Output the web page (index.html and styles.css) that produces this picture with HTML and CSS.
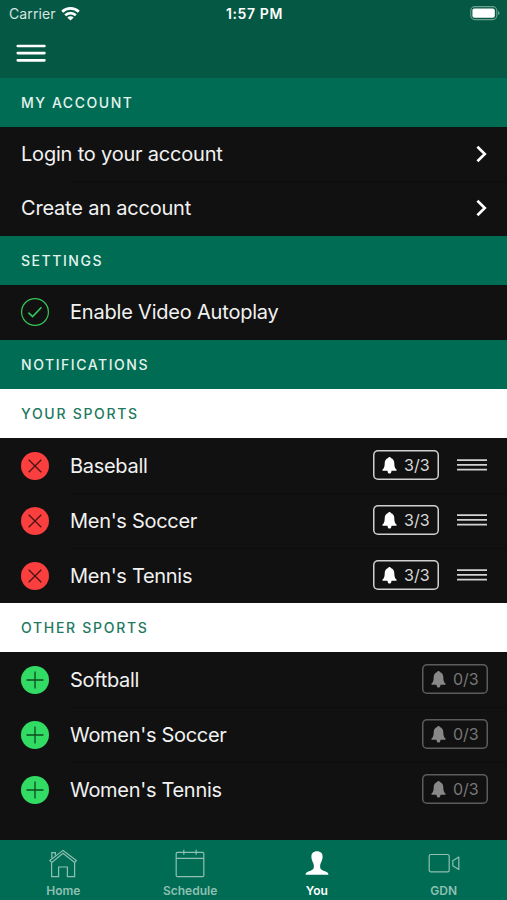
FILE: index.html
```html
<!DOCTYPE html>
<html lang="en">
<head>
    <meta charset="UTF-8">
    <meta name="viewport" content="width=device-width, initial-scale=1.0">
    <title>You</title>
    <link rel="stylesheet" href="styles.css">
</head>
<body>
    <svg class="symbols" aria-hidden="true">
        <symbol id="chevron" viewBox="0 0 12 18">
            <path d="M1.4 1.8 L8.8 9 L1.4 16.2" fill="none" stroke="#fff" stroke-width="2.6"/>
        </symbol>
        <symbol id="remove" viewBox="0 0 28 28">
            <circle cx="14" cy="14" r="14" fill="#fb3e3e"/>
            <path d="M7.7 7.7 L20.3 20.3 M20.3 7.7 L7.7 20.3" stroke="#471414" stroke-width="1.3"/>
        </symbol>
        <symbol id="add" viewBox="0 0 28 28">
            <circle cx="14" cy="14" r="14" fill="#32dc64"/>
            <path d="M14 5.5 V22.5 M5.5 14 H22.5" stroke="#0f4a20" stroke-width="1.3"/>
        </symbol>
        <symbol id="bell" viewBox="0 0 14 17">
            <path d="M7 0 C6.2 0 5.8 .5 5.7 1.1 C3.3 1.8 2.3 3.7 2.2 6.2 C2.1 9.5 1.8 11 0 12.6 V13.7 H14 V12.6 C12.2 11 11.9 9.5 11.8 6.2 C11.7 3.7 10.7 1.8 8.3 1.1 C8.2 .5 7.8 0 7 0 Z M5 13.7 C5.1 15.8 6 16.6 7 16.6 C8 16.6 8.9 15.8 9 13.7 Z" fill="currentColor"/>
        </symbol>
        <symbol id="grip" viewBox="0 0 30 12">
            <path d="M0 1.2 H30 M0 5.9 H30 M0 10.6 H30" stroke="#d2d2d2" stroke-width="1.7"/>
        </symbol>
    </svg>

    <div class="app">
        <header class="header">
            <div class="status">
                <div class="carrier">
                    <span>Carrier</span>
                    <svg width="19" height="14" viewBox="0 0 19 14" fill="none" stroke="#fff" stroke-width="2.7">
                        <path d="M1.2 4.8 C5.8 .3 13.2 .3 17.8 4.8"/>
                        <path d="M4.2 8.2 C7.2 5.3 11.8 5.3 14.8 8.2"/>
                        <path d="M9.5 13.6 L6.3 10.4 C8.2 8.9 10.8 8.9 12.7 10.4 Z" fill="#fff" stroke="none"/>
                    </svg>
                </div>
                <div class="time">1:57 PM</div>
                <svg class="battery" width="30" height="15" viewBox="0 0 30 15">
                    <rect x=".8" y=".6" width="26" height="13" rx="4" fill="none" stroke="#6b9f90" stroke-width="1.1"/>
                    <rect x="2.4" y="2.4" width="22.4" height="9.4" rx="2" fill="#fff"/>
                    <path d="M28 4.9 C30 5.6 30 8.4 28 9.1 Z" fill="#6b9f90"/>
                </svg>
            </div>
            <svg class="menu" width="30" height="20" viewBox="0 0 30 20">
                <path d="M1.8 2 H28.4 M1.8 9.1 H28.4 M1.8 16.3 H28.4" stroke="#fff" stroke-width="2.7" stroke-linecap="round"/>
            </svg>
        </header>

        <main>
            <h2 class="section">MY ACCOUNT</h2>
            <ul class="list links">
                <li class="row">
                    <span class="name">Login to your account</span>
                    <svg class="chevron"><use href="#chevron"/></svg>
                </li>
                <li class="row">
                    <span class="name">Create an account</span>
                    <svg class="chevron"><use href="#chevron"/></svg>
                </li>
            </ul>

            <h2 class="section">SETTINGS</h2>
            <ul class="list">
                <li class="row">
                    <svg class="round" viewBox="0 0 28 28" fill="none" stroke="#34c759">
                        <circle cx="14" cy="14" r="13.4" stroke-width="1.2"/>
                        <path d="M7.4 14.6 L11.6 18.6 L20.5 9.2" stroke-width="1.6"/>
                    </svg>
                    <span class="name">Enable Video Autoplay</span>
                </li>
            </ul>

            <h2 class="section">NOTIFICATIONS</h2>
            <h3 class="section light">YOUR SPORTS</h3>
            <ul class="list sports">
                <li class="row">
                    <svg class="round"><use href="#remove"/></svg>
                    <span class="name">Baseball</span>
                    <span class="count"><svg class="bell"><use href="#bell"/></svg>3/3</span>
                    <svg class="grip"><use href="#grip"/></svg>
                </li>
                <li class="row">
                    <svg class="round"><use href="#remove"/></svg>
                    <span class="name">Men's Soccer</span>
                    <span class="count"><svg class="bell"><use href="#bell"/></svg>3/3</span>
                    <svg class="grip"><use href="#grip"/></svg>
                </li>
                <li class="row">
                    <svg class="round"><use href="#remove"/></svg>
                    <span class="name">Men's Tennis</span>
                    <span class="count"><svg class="bell"><use href="#bell"/></svg>3/3</span>
                    <svg class="grip"><use href="#grip"/></svg>
                </li>
            </ul>

            <h3 class="section light">OTHER SPORTS</h3>
            <ul class="list sports">
                <li class="row">
                    <svg class="round"><use href="#add"/></svg>
                    <span class="name">Softball</span>
                    <span class="count off"><svg class="bell"><use href="#bell"/></svg>0/3</span>
                </li>
                <li class="row">
                    <svg class="round"><use href="#add"/></svg>
                    <span class="name">Women's Soccer</span>
                    <span class="count off"><svg class="bell"><use href="#bell"/></svg>0/3</span>
                </li>
                <li class="row">
                    <svg class="round"><use href="#add"/></svg>
                    <span class="name">Women's Tennis</span>
                    <span class="count off"><svg class="bell"><use href="#bell"/></svg>0/3</span>
                </li>
            </ul>
        </main>

        <nav class="tabs">
            <a class="tab">
                <svg width="32" height="30" viewBox="0 0 32 30" fill="none" stroke="currentColor" stroke-width="1.2">
                    <path d="M4.8 13.4 L2.8 11.6 L16 1.4 L29.4 11.6 L27.6 13.4 L16 4.3 Z"/>
                    <path d="M4.8 9.6 V3.6 H8.4 V6.4"/>
                    <path d="M4.6 13.4 V27.6 H11.6 V18 H20.4 V27.6 H27.6 V13.4"/>
                </svg>
                <span>Home</span>
            </a>
            <a class="tab">
                <svg width="32" height="30" viewBox="0 0 32 30" fill="none" stroke="currentColor" stroke-width="1.2">
                    <rect x="2.2" y="3.4" width="27.6" height="24.2" rx="1.2"/>
                    <path d="M2.2 9.4 H29.8 M9.8 .8 V5.8 M22.2 .8 V5.8"/>
                </svg>
                <span>Schedule</span>
            </a>
            <a class="tab active">
                <svg width="32" height="30" viewBox="0 0 32 30" fill="currentColor">
                    <path d="M16 2.3 C12.3 2.3 10.3 4.5 10.4 8 C10.5 10.7 11.4 12.2 12.2 13.9 C12.8 15.2 13 16.7 12.8 18.6 C12.6 20.1 11.8 20.9 9.5 21.7 C6.3 22.6 4.7 23.3 4.5 25.7 H27.5 C27.3 23.3 25.7 22.6 22.5 21.7 C20.2 20.9 19.4 20.1 19.2 18.6 C19 16.7 19.2 15.2 19.8 13.9 C20.6 12.2 21.5 10.7 21.6 8 C21.7 4.5 19.7 2.3 16 2.3 Z"/>
                </svg>
                <span>You</span>
            </a>
            <a class="tab">
                <svg width="32" height="30" viewBox="0 0 32 30" fill="none" stroke="currentColor" stroke-width="1.2">
                    <rect x="1.2" y="5.5" width="20" height="17.4" rx="1.6"/>
                    <path d="M30.8 8 L24.8 11.8 V16.8 L30.8 20.6 Z" stroke-linejoin="round"/>
                </svg>
                <span>GDN</span>
            </a>
        </nav>
    </div>
</body>
</html>
```
FILE: styles.css
```css
* {
    box-sizing: border-box;
}

body {
    margin: 0;
    font-family: Inter, Roboto, sans-serif;
    background: #111111;
    color: #f2f2f2;
}

.symbols {
    display: none;
}

.app {
    display: flex;
    flex-direction: column;
    height: 900px;
    overflow: hidden;
}

.header {
    height: 78px;
    background: #055844;
}

.status {
    display: grid;
    grid-template-columns: 1fr auto 1fr;
    align-items: center;
    height: 27px;
    padding: 0 7px 0 9px;
}

.carrier {
    display: flex;
    align-items: center;
    gap: 5px;
    font-size: 14px;
    letter-spacing: 0.1px;
    color: #d5e5e0;
}

.time {
    font-size: 14px;
    font-weight: 600;
    letter-spacing: 0.6px;
    color: #ffffff;
}

.battery {
    justify-self: end;
}

.menu {
    display: block;
    margin: 17px 0 0 16px;
}

main {
    flex: 1;
}

.section {
    display: flex;
    align-items: center;
    height: 49px;
    margin: 0;
    padding-left: 21px;
    background: #006c54;
    color: #e4f3ee;
    font-size: 14px;
    font-weight: 500;
    letter-spacing: 1.55px;
}

.section.light {
    background: #ffffff;
    color: #23795f;
    letter-spacing: 1.7px;
}

.list {
    margin: 0;
    padding: 0;
    list-style: none;
}

.row {
    display: flex;
    align-items: center;
    height: 55px;
    padding: 0 19px 0 21px;
}

.links .row {
    height: 54.25px;
}

.row + .row {
    background: linear-gradient(#0d0d0d, #0d0d0d) 70px 0 / 100% 1px no-repeat;
}

.sports .row {
    padding-top: 1px;
}

.name {
    flex: 1;
    font-size: 20px;
    letter-spacing: -0.2px;
    white-space: nowrap;
}

.sports .name {
    letter-spacing: -0.3px;
}

.chevron {
    width: 12px;
    height: 18px;
}

.round {
    width: 28px;
    height: 28px;
    margin-right: 21px;
}

.count {
    display: flex;
    align-items: center;
    gap: 7px;
    width: 66px;
    height: 30px;
    margin-bottom: 1px;
    padding-left: 9px;
    box-shadow: inset 0 0 0 1.5px #d0d0d0;
    border-radius: 5px;
    font-size: 16px;
    color: #d8d8d8;
}

.bell {
    width: 15px;
    height: 17px;
    color: #ffffff;
}

.count.off {
    box-shadow: inset 0 0 0 1.5px #5c5c5c;
    color: #777777;
}

.off .bell {
    color: #888888;
}

.grip {
    width: 30px;
    height: 12px;
    margin: 0 1px 2px 18px;
}

.tabs {
    display: grid;
    grid-template-columns: repeat(4, 1fr);
    height: 60px;
    background: #006c54;
}

.tab {
    display: flex;
    flex-direction: column;
    align-items: center;
    padding-top: 9px;
    color: #8fc0b2;
    font-size: 12px;
    font-weight: 600;
    line-height: 15px;
}

.tab span {
    margin-top: 4px;
}

.tab.active {
    color: #ffffff;
}
```
